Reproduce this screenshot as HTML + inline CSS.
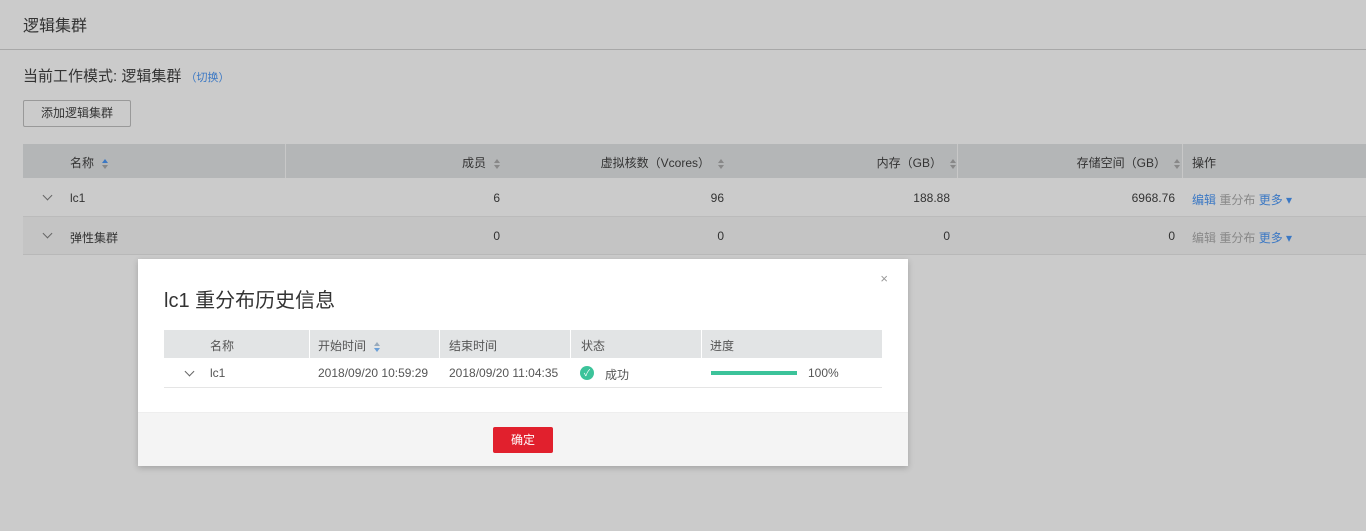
<!DOCTYPE html>
<html><head><meta charset="utf-8"><style>
*{margin:0;padding:0;box-sizing:border-box}
body{width:1366px;height:531px;background:#cbcbcb;font-family:"Liberation Sans","Noto Sans CJK SC",sans-serif;color:#333;position:relative;overflow:hidden;font-size:12px}
.a{position:absolute;white-space:nowrap}
.sort{display:inline-block;width:6px;margin-left:8px;vertical-align:middle;font-size:0}
.sort i{display:block;width:0;height:0;border-left:3px solid transparent;border-right:3px solid transparent}
.up{border-bottom:4px solid #888;margin-bottom:2px}
.dn{border-top:4px solid #888}
.blue{color:#3b78c4}
.chev{position:absolute;width:7px;height:7px;border-right:1px solid #666;border-bottom:1px solid #666;transform:rotate(45deg)}
</style></head><body>
<div class="a" style="left:23px;top:12px;font-size:16px;color:#333">逻辑集群</div>
<div class="a" style="left:0;top:49px;width:1366px;height:1px;background:#a8a8a8"></div>
<div class="a" style="left:23px;top:65px;font-size:15px">当前工作模式: 逻辑集群 <span class="blue" style="font-size:11px">（切换）</span></div>
<div class="a" style="left:23px;top:100px;width:108px;height:27px;border:1px solid #999;border-radius:2px;text-align:center;line-height:25px;font-size:12px">添加逻辑集群</div>

<div class="a" style="left:23px;top:144px;width:1343px;height:34px;background:#b4b6b7"></div>
<div class="a" style="left:285px;top:144px;width:1px;height:34px;background:#c8c8c8"></div>
<div class="a" style="left:957px;top:144px;width:1px;height:34px;background:#c8c8c8"></div>
<div class="a" style="left:1182px;top:144px;width:1px;height:34px;background:#c8c8c8"></div>
<div class="a" style="left:70px;top:154px">名称<span class="sort"><i class="up" style="border-bottom-color:#3b78c4"></i><i class="dn"></i></span></div>
<div class="a" style="right:866px;top:154px">成员<span class="sort"><i class="up"></i><i class="dn"></i></span></div>
<div class="a" style="right:642px;top:154px">虚拟核数（Vcores）<span class="sort"><i class="up"></i><i class="dn"></i></span></div>
<div class="a" style="right:410px;top:154px">内存（GB）<span class="sort"><i class="up"></i><i class="dn"></i></span></div>
<div class="a" style="right:186px;top:154px">存储空间（GB）<span class="sort"><i class="up"></i><i class="dn"></i></span></div>
<div class="a" style="left:1192px;top:154px">操作</div>

<div class="a" style="left:23px;top:216px;width:1343px;height:39px;background:#c4c4c4;border-top:1px solid #bbb;border-bottom:1px solid #b8b8b8"></div>
<div class="chev" style="left:44px;top:192px"></div>
<div class="a" style="left:70px;top:191px">lc1</div>
<div class="a" style="right:866px;top:191px">6</div>
<div class="a" style="right:642px;top:191px">96</div>
<div class="a" style="right:416px;top:191px">188.88</div>
<div class="a" style="right:191px;top:191px">6968.76</div>
<div class="a" style="left:1192px;top:191px"><span class="blue">编辑</span> <span style="color:#888">重分布</span> <span class="blue">更多 ▾</span></div>
<div class="chev" style="left:44px;top:230px"></div>
<div class="a" style="left:70px;top:229px">弹性集群</div>
<div class="a" style="right:866px;top:229px">0</div>
<div class="a" style="right:642px;top:229px">0</div>
<div class="a" style="right:416px;top:229px">0</div>
<div class="a" style="right:191px;top:229px">0</div>
<div class="a" style="left:1192px;top:229px"><span style="color:#888">编辑 重分布</span> <span class="blue">更多 ▾</span></div>

<div class="a" style="left:138px;top:259px;width:770px;height:207px;background:#fff;box-shadow:0 2px 6px rgba(0,0,0,.2)">
<div class="a" style="right:20px;top:12px;color:#999;font-size:13px">×</div>
<div class="a" style="left:26px;top:25px;font-size:20px;color:#333">lc1 重分布历史信息</div>
<div class="a" style="left:26px;top:71px;width:718px;height:28px;background:#e2e4e5"></div>
<div class="a" style="left:171px;top:71px;width:1px;height:28px;background:#fff"></div>
<div class="a" style="left:301px;top:71px;width:1px;height:28px;background:#fff"></div>
<div class="a" style="left:432px;top:71px;width:1px;height:28px;background:#fff"></div>
<div class="a" style="left:563px;top:71px;width:1px;height:28px;background:#fff"></div>
<div class="a" style="left:72px;top:78px;color:#555">名称</div>
<div class="a" style="left:180px;top:78px;color:#555">开始时间<span class="sort"><i class="up" style="border-bottom-color:#9ab"></i><i class="dn" style="border-top-color:#6a9fd8"></i></span></div>
<div class="a" style="left:311px;top:78px;color:#555">结束时间</div>
<div class="a" style="left:443px;top:78px;color:#555">状态</div>
<div class="a" style="left:572px;top:78px;color:#555">进度</div>
<div class="a" style="left:26px;top:128px;width:718px;height:1px;background:#e5e5e5"></div>
<div class="chev" style="left:48px;top:109px"></div>
<div class="a" style="left:72px;top:107px;color:#555">lc1</div>
<div class="a" style="left:180px;top:107px;color:#555">2018/09/20 10:59:29</div>
<div class="a" style="left:311px;top:107px;color:#555">2018/09/20 11:04:35</div>
<div class="a" style="left:442px;top:107px;width:14px;height:14px;border-radius:7px;background:#3cc39a;color:#fff;font-size:9px;text-align:center;line-height:14px">✓</div>
<div class="a" style="left:467px;top:107px;color:#555">成功</div>
<div class="a" style="left:573px;top:112px;width:86px;height:4px;background:#3cc39a"></div>
<div class="a" style="left:670px;top:107px;color:#555">100%</div>
<div class="a" style="left:0;top:153px;width:770px;height:54px;background:#f4f4f4;border-top:1px solid #eee"></div>
<div class="a" style="left:355px;top:168px;width:60px;height:26px;background:#e1202d;border-radius:2px;color:#fff;text-align:center;line-height:26px;font-size:12px">确定</div>
</div>
</body></html>
